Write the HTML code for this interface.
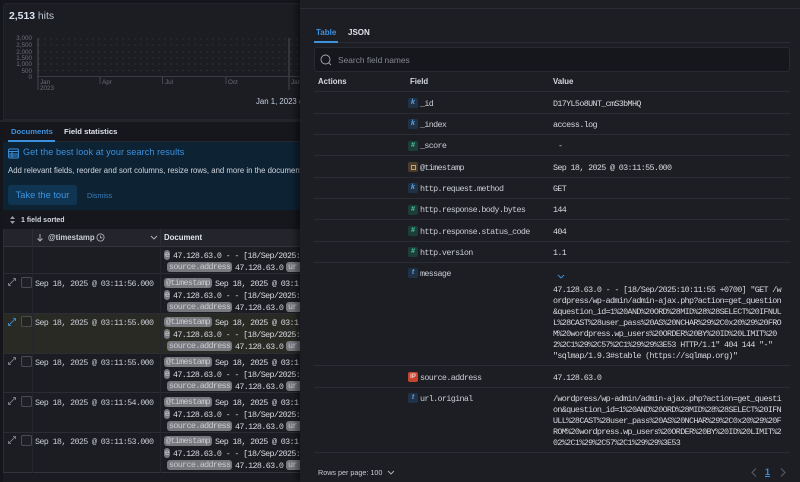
<!DOCTYPE html>
<html><head><meta charset="utf-8"><style>
html,body{margin:0;padding:0;background:#15161b;width:800px;height:482px;overflow:hidden}
body{position:relative;font-family:"Liberation Sans",sans-serif;color:#d5dae3}
div{position:absolute;white-space:nowrap}
.l{background:#2b2d35;height:1px}
.ts,.v,.f,.val,.w{font-family:"Liberation Mono",monospace;font-size:8.4px;letter-spacing:-.64px;color:#d5d8de;line-height:10px;transform:translateY(1px)}
.ts{left:35px;color:#c8ccd4}
.f{left:420px;color:#c9cdd4}
.val{left:553px}
.w{left:553px;line-height:11px}
.tag{background:#77797f;color:#c9cbcf;border-radius:3px;height:10px;line-height:10px;font-family:"Liberation Mono",monospace;font-size:8.4px;letter-spacing:-.64px;padding:0 2px}
.e{left:164px;width:6px;padding:0;text-align:center;overflow:hidden}
.s{left:167px}
.u{left:286px;width:14px;border-radius:3px 0 0 3px}
.x{position:absolute;left:8px}
.c{left:21px;width:9px;height:9px;border:1px solid #4a4c54;border-radius:2px;background:#1f2026}
.ic{width:10px;height:10px;border-radius:2px;left:408px;font-size:7px;line-height:10px;text-align:center;font-weight:bold;font-style:italic}
.k{background:#1f3247;color:#61a2e6}
.n{background:#1b3f38;color:#4fc39c}
</style></head><body>

<!-- left chart panel -->
<div style="left:3px;top:3px;width:300px;height:117px;background:#1c1d23;border-radius:4px 0 0 0;border:1px solid #24252c;box-sizing:border-box"></div>
<div style="left:9px;top:11px;font-size:10.4px;line-height:12px;color:#b9c4d3"><b style="color:#d9e3f0">2,513</b> hits</div>

<svg style="position:absolute;left:0;top:30px" width="300" height="65">
<g stroke="#2d2f36" stroke-dasharray="2 4" stroke-width="1"><path d="M38 9H300M38 15H300M38 22H300M38 28H300M38 34H300M38 40.500H300"/></g>
<path d="M38 8V47M289 8V47" stroke="#4c4e55" stroke-width="1"/>
<path d="M38 46.500H300" stroke="#3a3c44"/>
<path d="M38 47V60M100 47V54M162.500 47V54M226 47V54M289 47V60" stroke="#44464d"/>
<g font-family="Liberation Sans" font-size="6.300" fill="#6c6e75" text-anchor="end">
<text x="32" y="10">3,000</text><text x="32" y="17">2,500</text><text x="32" y="24">2,000</text><text x="32" y="30">1,500</text><text x="32" y="36">1,000</text><text x="32" y="43">500</text><text x="32" y="49">0</text></g>
<g font-family="Liberation Sans" font-size="6.300" fill="#6c6e75">
<text x="40" y="54">Jan</text><text x="40" y="60">2023</text><text x="102" y="54">Apr</text><text x="165" y="54">Jul</text><text x="228" y="54">Oct</text><text x="291" y="54">Jan</text></g>
</svg>
<div style="left:256px;top:97px;font-size:7.800px;line-height:10px;color:#c5d0de">Jan 1, 2023 @</div>

<!-- tabs -->
<div style="left:0;top:120px;width:300px;height:2px;background:#24252b"></div>
<div style="left:3px;top:122px;width:297px;height:20px;background:#16171c"></div>
<div style="left:11px;top:127px;font-size:7.700px;line-height:10px;font-weight:bold;color:#3d92de">Documents</div>
<div style="left:64px;top:127px;font-size:7.700px;line-height:10px;font-weight:bold;color:#dfe3ea">Field statistics</div>
<div style="left:8px;top:140px;width:47px;height:2px;background:#3d92de"></div>
<div style="left:55px;top:141px;width:245px;height:1px;background:#25272e"></div>

<!-- callout -->
<div style="left:3px;top:142px;width:297px;height:68px;background:#0d2233"></div>
<svg style="position:absolute;left:8px;top:148px" width="11" height="11" fill="none" stroke="#3d92de" stroke-width=".9"><rect x=".5" y="1" width="10" height="9" rx="1"/><path d="M.5 3.500H10.500M.5 6H10.500M.5 8H10.500M4 3.500V10"/></svg>
<div style="left:23px;top:147px;font-size:9.100px;line-height:11px;color:#3d92de;letter-spacing:.08px">Get the best look at your search results</div>
<div style="left:8px;top:166px;font-size:7.800px;line-height:10px;color:#d1d6de;width:292px;overflow:hidden">Add relevant fields, reorder and sort columns, resize rows, and more in the document table.</div>
<div style="left:8px;top:185px;width:69px;height:20px;background:#103553;border-radius:3px;color:#3d92de;font-size:9.300px;line-height:20px;text-align:center">Take the tour</div>
<div style="left:87px;top:191px;font-size:7.200px;line-height:10px;color:#3a7fbd">Dismiss</div>

<!-- toolbar -->
<div style="left:3px;top:210px;width:297px;height:19px;background:#16171c"></div>
<svg style="position:absolute;left:9px;top:216px" width="7" height="8" fill="#9a9da5"><path d="M3.500 0L6 3H1ZM3.500 8L1 5H6Z"/></svg>
<div style="left:21px;top:216px;font-size:7px;line-height:10px;font-weight:bold;color:#d5d9e0">1 field sorted</div>

<!-- table head -->
<div style="left:3px;top:229px;width:297px;height:17px;background:#24252c;border-bottom:1px solid #33353d"></div>
<div style="left:32px;top:229px;width:1px;height:17px;background:#2d2f36"></div>
<div style="left:160px;top:229px;width:1px;height:17px;background:#2d2f36"></div>
<svg style="position:absolute;left:36px;top:233px" width="8" height="9" fill="none" stroke="#b5b8bf" stroke-width=".9"><path d="M4 1V8M1.500 5.500L4 8L6.500 5.500"/></svg>
<div style="left:48px;top:233px;font-size:7.800px;line-height:10px;font-weight:bold;color:#c9cdd5">@timestamp</div>
<svg style="position:absolute;left:96px;top:233px" width="9" height="9" fill="none" stroke="#b5b8bf" stroke-width=".8"><circle cx="4.500" cy="4.500" r="3.600"/><path d="M4.500 2.500V4.800H6.500"/></svg>
<svg style="position:absolute;left:150px;top:235px" width="8" height="5" fill="none" stroke="#b5b8bf" stroke-width=".9"><path d="M1 1L4 4L7 1"/></svg>
<div style="left:164px;top:233px;font-size:7.800px;line-height:10px;font-weight:bold;color:#dfe3ea">Document</div>

<!-- table body -->
<div style="left:3px;top:247px;width:297px;height:226px;background:#1c1d23"></div>
<div style="left:3px;top:314px;width:297px;height:39px;background:#2a2a25"></div>
<div style="left:3px;top:273px;width:297px;height:1px;background:#2b2d35"></div>
<div style="left:3px;top:313px;width:297px;height:1px;background:#2b2d35"></div>
<div style="left:3px;top:353px;width:297px;height:1px;background:#2b2d35"></div>
<div style="left:3px;top:392px;width:297px;height:1px;background:#2b2d35"></div>
<div style="left:3px;top:432px;width:297px;height:1px;background:#2b2d35"></div>
<div style="left:3px;top:472px;width:297px;height:1px;background:#33353d"></div>
<div style="left:3px;top:473px;width:297px;height:9px;background:#1b1c21"></div>
<div style="left:3px;top:229px;width:1px;height:244px;background:#2b2d35"></div>
<div style="left:32px;top:246px;width:1px;height:227px;background:#25272e"></div>
<div style="left:160px;top:246px;width:1px;height:227px;background:#25272e"></div>

<!-- row 0 partial -->
<div class="tag e" style="top:250px">e</div>
<div class="v" style="left:173px;top:250px">47.128.63.0 - - [18/Sep/2025:</div>
<div class="tag s" style="top:262px">source.address</div>
<div class="v" style="left:235px;top:262px">47.128.63.0</div>
<div class="tag u" style="top:262px">ur</div>

<!-- row 1 -->
<svg class="x" style="top:278px" width="8" height="8" fill="none" stroke="#8a8d94" stroke-width=".8"><path d="M.5 7.500L7.500 .5M5 .5H7.500V3M.5 5V7.500H3"/></svg>
<div class="c" style="top:277px"></div>
<div class="ts" style="top:278px">Sep 18, 2025 @ 03:11:56.000</div>
<div class="tag" style="left:164px;top:278px">@timestamp</div>
<div class="v" style="left:215px;top:278px">Sep 18, 2025 @ 03:1</div>
<div class="tag e" style="top:290px">e</div>
<div class="v" style="left:173px;top:290px">47.128.63.0 - - [18/Sep/2025:</div>
<div class="tag s" style="top:302px">source.address</div>
<div class="v" style="left:235px;top:302px">47.128.63.0</div>
<div class="tag u" style="top:302px">ur</div>

<!-- row 2 -->
<svg class="x" style="top:318px" width="8" height="8" fill="none" stroke="#3d92de" stroke-width=".8"><path d="M.5 7.500L7.500 .5M5 .5H7.500V3M.5 5V7.500H3"/></svg>
<div class="c" style="top:316px;background:#23231f"></div>
<div class="ts" style="top:317px">Sep 18, 2025 @ 03:11:55.000</div>
<div class="tag" style="left:164px;top:317px">@timestamp</div>
<div class="v" style="left:215px;top:317px">Sep 18, 2025 @ 03:1</div>
<div class="tag e" style="top:329px">e</div>
<div class="v" style="left:173px;top:329px">47.128.63.0 - - [18/Sep/2025:</div>
<div class="tag s" style="top:341px">source.address</div>
<div class="v" style="left:235px;top:341px">47.128.63.0</div>
<div class="tag u" style="top:341px">ur</div>

<!-- row 3 -->
<svg class="x" style="top:357px" width="8" height="8" fill="none" stroke="#8a8d94" stroke-width=".8"><path d="M.5 7.500L7.500 .5M5 .5H7.500V3M.5 5V7.500H3"/></svg>
<div class="c" style="top:356px"></div>
<div class="ts" style="top:357px">Sep 18, 2025 @ 03:11:55.000</div>
<div class="tag" style="left:164px;top:357px">@timestamp</div>
<div class="v" style="left:215px;top:357px">Sep 18, 2025 @ 03:1</div>
<div class="tag e" style="top:369px">e</div>
<div class="v" style="left:173px;top:369px">47.128.63.0 - - [18/Sep/2025:</div>
<div class="tag s" style="top:381px">source.address</div>
<div class="v" style="left:235px;top:381px">47.128.63.0</div>
<div class="tag u" style="top:381px">ur</div>

<!-- row 4 -->
<svg class="x" style="top:397px" width="8" height="8" fill="none" stroke="#8a8d94" stroke-width=".8"><path d="M.5 7.500L7.500 .5M5 .5H7.500V3M.5 5V7.500H3"/></svg>
<div class="c" style="top:396px"></div>
<div class="ts" style="top:397px">Sep 18, 2025 @ 03:11:54.000</div>
<div class="tag" style="left:164px;top:397px">@timestamp</div>
<div class="v" style="left:215px;top:397px">Sep 18, 2025 @ 03:1</div>
<div class="tag e" style="top:409px">e</div>
<div class="v" style="left:173px;top:409px">47.128.63.0 - - [18/Sep/2025:</div>
<div class="tag s" style="top:421px">source.address</div>
<div class="v" style="left:235px;top:421px">47.128.63.0</div>
<div class="tag u" style="top:421px">ur</div>

<!-- row 5 -->
<svg class="x" style="top:436px" width="8" height="8" fill="none" stroke="#8a8d94" stroke-width=".8"><path d="M.5 7.500L7.500 .5M5 .5H7.500V3M.5 5V7.500H3"/></svg>
<div class="c" style="top:435px"></div>
<div class="ts" style="top:436px">Sep 18, 2025 @ 03:11:53.000</div>
<div class="tag" style="left:164px;top:436px">@timestamp</div>
<div class="v" style="left:215px;top:436px">Sep 18, 2025 @ 03:1</div>
<div class="tag e" style="top:448px">e</div>
<div class="v" style="left:173px;top:448px">47.128.63.0 - - [18/Sep/2025:</div>
<div class="tag s" style="top:460px">source.address</div>
<div class="v" style="left:235px;top:460px">47.128.63.0</div>
<div class="tag u" style="top:460px">ur</div>

<!-- flyout -->
<div style="left:300px;top:0;width:500px;height:482px;background:#1d1e24;box-shadow:-4px 0 6px rgba(0,0,0,.45)"></div>
<div class="l" style="left:300px;top:8px;width:500px"></div>
<div style="left:316px;top:28px;font-size:8px;line-height:10px;font-weight:bold;color:#3d92de">Table</div>
<div style="left:348px;top:28px;font-size:8px;line-height:10px;font-weight:bold;color:#dfe3ea">JSON</div>
<div class="l" style="left:314px;top:42px;width:476px"></div>
<div style="left:314px;top:41px;width:24px;height:2px;background:#3d92de"></div>

<div style="left:314px;top:47px;width:476px;height:25px;background:#16171c;border:1px solid #282a31;border-radius:3px;box-sizing:border-box"></div>
<svg style="position:absolute;left:320px;top:54px" width="12" height="12" fill="none" stroke="#a5a8af" stroke-width=".9"><circle cx="5.500" cy="5.500" r="4.500"/><path d="M8.800 8.800L11 11"/></svg>
<div style="left:338px;top:55px;font-size:8.400px;line-height:10px;color:#84878f">Search field names</div>

<div style="left:318px;top:77px;font-size:7.800px;line-height:10px;font-weight:bold;color:#d5d9e0">Actions</div>
<div style="left:410px;top:77px;font-size:7.800px;line-height:10px;font-weight:bold;color:#d5d9e0">Field</div>
<div style="left:553px;top:77px;font-size:7.800px;line-height:10px;font-weight:bold;color:#d5d9e0">Value</div>

<div class="l" style="left:314px;top:91px;width:476px"></div>
<div class="l" style="left:314px;top:113px;width:476px"></div>
<div class="l" style="left:314px;top:134px;width:476px"></div>
<div class="l" style="left:314px;top:155px;width:476px"></div>
<div class="l" style="left:314px;top:177px;width:476px"></div>
<div class="l" style="left:314px;top:198px;width:476px"></div>
<div class="l" style="left:314px;top:219px;width:476px"></div>
<div class="l" style="left:314px;top:241px;width:476px"></div>
<div class="l" style="left:314px;top:262px;width:476px"></div>
<div class="l" style="left:314px;top:365px;width:476px"></div>
<div class="l" style="left:314px;top:387px;width:476px"></div>
<div class="l" style="left:314px;top:452px;width:476px"></div>

<div class="ic k" style="top:98px">k</div><div class="f" style="top:98px">_id</div><div class="val" style="top:98px">D17YL5o8UNT_cmS3bMHQ</div>
<div class="ic k" style="top:119px">k</div><div class="f" style="top:119px">_index</div><div class="val" style="top:119px">access.log</div>
<div class="ic n" style="top:141px">#</div><div class="f" style="top:140px">_score</div><div class="val" style="top:140px;left:558px">-</div>
<div class="ic" style="top:162px;background:#4a3d2b"></div><div style="left:411px;top:165px;width:3px;height:3px;border:1px solid #c9a26b"></div><div class="f" style="top:162px">@timestamp</div><div class="val" style="top:162px">Sep 18, 2025 @ 03:11:55.000</div>
<div class="ic k" style="top:183px">k</div><div class="f" style="top:183px">http.request.method</div><div class="val" style="top:183px">GET</div>
<div class="ic n" style="top:205px">#</div><div class="f" style="top:204px">http.response.body.bytes</div><div class="val" style="top:204px">144</div>
<div class="ic n" style="top:226px">#</div><div class="f" style="top:226px">http.response.status_code</div><div class="val" style="top:226px">404</div>
<div class="ic n" style="top:247px">#</div><div class="f" style="top:247px">http.version</div><div class="val" style="top:247px">1.1</div>
<div class="ic k" style="top:268px">t</div><div class="f" style="top:268px">message</div>
<svg style="position:absolute;left:557px;top:274px" width="8" height="5" fill="none" stroke="#3d92de" stroke-width=".9"><path d="M1 1L4 4L7 1"/></svg>

<div class="w" style="top:284px">47.128.63.0 - - [18/Sep/2025:10:11:55 +0700] "GET /w</div>
<div class="w" style="top:295px">ordpress/wp-admin/admin-ajax.php?action=get_question</div>
<div class="w" style="top:306px">&amp;question_id=1%20AND%20ORD%28MID%28%28SELECT%20IFNUL</div>
<div class="w" style="top:317px">L%28CAST%28user_pass%20AS%20NCHAR%29%2C0x20%29%20FRO</div>
<div class="w" style="top:328px">M%20wordpress.wp_users%20ORDER%20BY%20ID%20LIMIT%20</div>
<div class="w" style="top:339px">2%2C1%29%2C57%2C1%29%29%3E53 HTTP/1.1" 404 144 "-"</div>
<div class="w" style="top:350px">"sqlmap/1.9.3#stable (https://sqlmap.org)"</div>

<div class="ic" style="top:372px;background:#c4452f;color:#f2d5cc;font-style:normal;font-size:6px">IP</div><div class="f" style="top:372px">source.address</div><div class="val" style="top:372px">47.128.63.0</div>
<div class="ic k" style="top:393px">t</div><div class="f" style="top:393px">url.original</div>
<div class="w" style="top:393px">/wordpress/wp-admin/admin-ajax.php?action=get_questi</div>
<div class="w" style="top:404px">on&amp;question_id=1%20AND%20ORD%28MID%28%28SELECT%20IFN</div>
<div class="w" style="top:415px">ULL%28CAST%28user_pass%20AS%20NCHAR%29%2C0x20%29%20F</div>
<div class="w" style="top:426px">ROM%20wordpress.wp_users%20ORDER%20BY%20ID%20LIMIT%2</div>
<div class="w" style="top:437px">02%2C1%29%2C57%2C1%29%29%3E53</div>

<div style="left:318px;top:468px;font-size:7.200px;line-height:10px;color:#c9cdd4">Rows per page: 100</div>
<svg style="position:absolute;left:387px;top:470px" width="8" height="5" fill="none" stroke="#b5b8bf" stroke-width=".9"><path d="M1 1L4 4L7 1"/></svg>
<svg style="position:absolute;left:751px;top:468px" width="6" height="9" fill="none" stroke="#5c5f67" stroke-width="1"><path d="M5 .5L1 4.500L5 8.500"/></svg>
<div style="left:765px;top:467px;font-size:9px;line-height:11px;font-weight:bold;color:#3d92de;text-decoration:underline">1</div>
<svg style="position:absolute;left:780px;top:468px" width="6" height="9" fill="none" stroke="#5c5f67" stroke-width="1"><path d="M1 .5L5 4.500L1 8.500"/></svg>

</body></html>
